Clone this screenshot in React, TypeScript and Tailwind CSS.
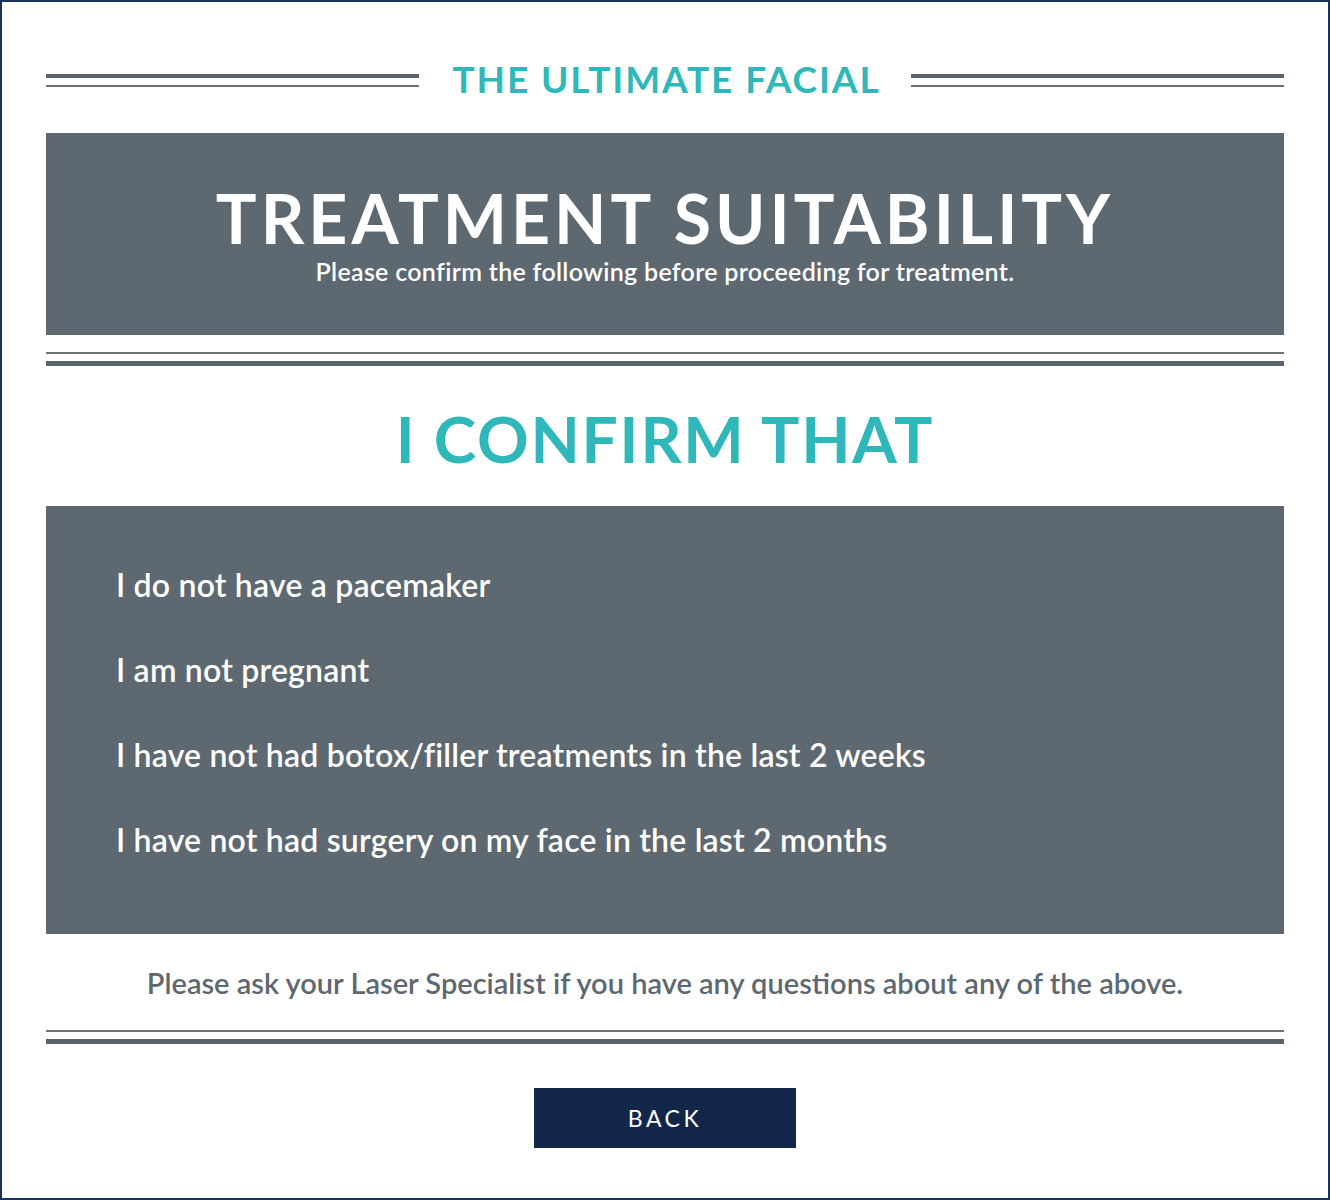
import React from 'react';

const items = [
    'I do not have a pacemaker',
    'I am not pregnant',
    'I have not had botox/filler treatments in the last 2 weeks',
    'I have not had surgery on my face in the last 2 months',
];

const DoubleRule = ({ thickFirst }: { thickFirst: boolean }) => (
    <div className="flex flex-col gap-[7px]">
        {thickFirst ? (
            <>
                <div className="h-[4px] bg-[#5a636b]" />
                <div className="h-[2px] bg-[#6b7177]" />
            </>
        ) : (
            <>
                <div className="h-[2px] bg-[#6b7177]" />
                <div className="h-[5px] bg-[#5a646d]" />
            </>
        )}
    </div>
);

const App: React.FC = () => {
    return (
        <div
            className="w-[1330px] h-[1200px] border-2 border-[#1c3358] bg-white px-[44px]"
            style={{ fontFamily: 'Lato, "Noto Sans", sans-serif' }}
        >
            <div className="mt-[58px] flex items-center h-[40px]">
                <div className="flex-1">
                    <DoubleRule thickFirst />
                </div>
                <h1 className="pl-[33px] pr-[30px] pb-[4px] text-[37px] font-bold tracking-[1.9px] text-[#2fb8b9] leading-none">
                    THE ULTIMATE FACIAL
                </h1>
                <div className="flex-1">
                    <DoubleRule thickFirst />
                </div>
            </div>

            <div className="mt-[33px] h-[202px] bg-[#5d6871] flex flex-col items-center justify-center text-white">
                <h2 className="text-[68px] font-bold tracking-[4px] leading-none">TREATMENT SUITABILITY</h2>
                <p className="mt-[7px] text-[25px] font-semibold tracking-[0.3px] leading-none">
                    Please confirm the following before proceeding for treatment.
                </p>
            </div>

            <div className="mt-[17px]">
                <DoubleRule thickFirst={false} />
            </div>

            <div className="h-[140px] pt-[6px] flex items-center justify-center">
                <h2 className="text-[64px] font-bold tracking-[1.8px] text-[#2fb8b9] leading-none">I CONFIRM THAT</h2>
            </div>

            <div className="h-[428px] bg-[#5d6871] pl-[70px] pt-[61px]">
                <ul className="flex flex-col gap-[49px] text-white text-[32px] font-semibold tracking-[0.2px] leading-[36px]">
                    {items.map(t => (
                        <li key={t}>{t}</li>
                    ))}
                </ul>
            </div>

            <p className="mt-[34px] text-center text-[29px] font-semibold text-[#5d6871] leading-none">
                Please ask your Laser Specialist if you have any questions about any of the above.
            </p>

            <div className="mt-[33px]">
                <DoubleRule thickFirst={false} />
            </div>

            <div className="mt-[44px] flex justify-center">
                <button className="w-[262px] h-[60px] bg-[#12264a] text-white text-[23px] tracking-[3.5px] font-normal">
                    BACK
                </button>
            </div>
        </div>
    );
};

export default App;
